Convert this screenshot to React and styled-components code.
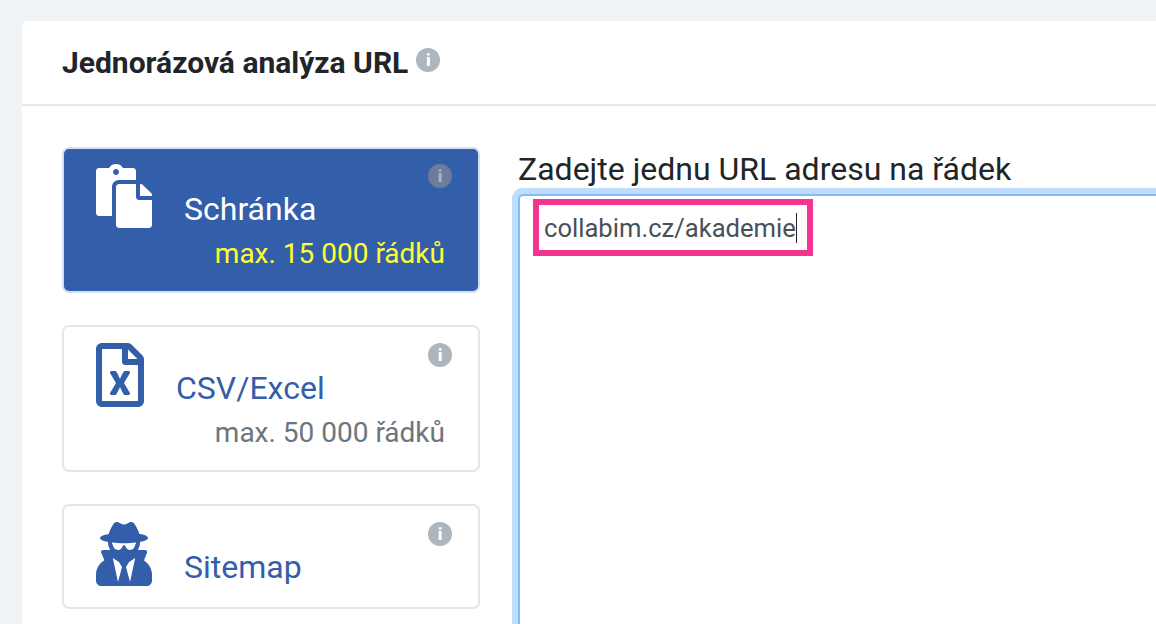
import React from 'react';
import styled, { createGlobalStyle } from 'styled-components';
import { FaPaste, FaRegFileExcel, FaUserSecret } from 'react-icons/fa';

const GlobalStyle = createGlobalStyle`
  html, body {
    margin: 0;
    height: 100%;
    overflow: hidden;
    background: #f0f3f6;
    font-family: Roboto, "Liberation Sans", sans-serif;
    color: #212529;
  }
`;

const Page = styled.div`
  width: 1156px;
  height: 624px;
  padding: 21px 0 0 22px;
  box-sizing: border-box;
  overflow: hidden;
`;

const Panel = styled.section`
  width: 1200px;
  height: 700px;
  background: #fff;
  border-radius: 5px 0 0 0;
`;

const PanelHeader = styled.header`
  display: flex;
  align-items: flex-start;
  gap: 8px;
  height: 85px;
  box-sizing: border-box;
  padding: 25px 40px 0;
  border-bottom: 2px solid #e6e8ea;
`;

const Title = styled.h2`
  margin: 0;
  font-size: 30px;
  line-height: 34px;
  font-weight: 700;
`;

const InfoDot = styled.span`
  display: flex;
  align-items: center;
  justify-content: center;
  flex: none;
  width: 24px;
  height: 24px;
  border-radius: 50%;
  background: ${(p) => (p.$dim ? '#6e7c9c' : '#adb5bd')};
  color: ${(p) => (p.$dim ? '#a9b3c6' : '#fff')};
  font-size: 17px;
  font-weight: 900;
  line-height: 1;
`;

const TitleInfo = styled(InfoDot)`
  margin-top: 2px;
`;

const PanelBody = styled.div`
  display: grid;
  grid-template-columns: 418px 1fr;
  column-gap: 38px;
  padding: 41px 0 0 40px;
`;

const SourceList = styled.div`
  display: flex;
  flex-direction: column;
  gap: 32px;
`;

const SourceCard = styled.div`
  position: relative;
  box-sizing: border-box;
  height: ${(p) => p.$height}px;
  padding: ${(p) => p.$top}px 33px 0 32px;
  border: 2px solid ${(p) => (p.$active ? '#d3e0f2' : '#e3e5e7')};
  border-radius: 7px;
  background: ${(p) => (p.$active ? '#335eaa' : '#fff')};
  color: ${(p) => (p.$active ? '#fff' : '#335eaa')};

  ${InfoDot} {
    position: absolute;
    top: ${(p) => p.$infoTop}px;
    right: 26px;
  }
`;

const CardRow = styled.div`
  display: flex;
  align-items: flex-start;
  gap: 32px;

  svg {
    display: block;
    flex: none;
    height: 64px;
    width: ${(p) => p.$iconWidth}px;
  }
`;

const CardLabel = styled.div`
  margin-top: 27px;
  font-size: 32px;
  line-height: 36px;
`;

const Limit = styled.div`
  margin-top: 10px;
  text-align: right;
  font-size: 28px;
  line-height: 32px;
  color: ${(p) => (p.$active ? '#ffff33' : '#6c757d')};
`;

const FieldLabel = styled.label`
  display: block;
  margin-bottom: 3px;
  font-size: 32px;
  line-height: 44px;
`;

const UrlField = styled.div`
  box-sizing: border-box;
  height: 500px;
  padding: 3px 0 0 13px;
  border: 2px solid #80bdff;
  border-right: 0;
  border-bottom: 0;
  border-radius: 5px 0 0 0;
  box-shadow: 0 0 0 6px #bfdcfb;
  font-size: 25.6px;
  color: #495057;
`;

const Highlight = styled.span`
  display: inline-flex;
  align-items: center;
  box-sizing: border-box;
  height: 57px;
  padding: 0 10px 0 5px;
  border: 6px solid #f1358f;
`;

const Caret = styled.span`
  display: inline-block;
  width: 1.5px;
  height: 30px;
  background: #212529;
`;

const App = () => (
  <Page>
    <GlobalStyle />
    <Panel>
      <PanelHeader>
        <Title>Jednorázová analýza URL</Title>
        <TitleInfo>i</TitleInfo>
      </PanelHeader>
      <PanelBody>
        <SourceList>
          <SourceCard $active $height={146} $top={15} $infoTop={15}>
            <CardRow $iconWidth={56}>
              <FaPaste />
              <CardLabel>Schránka</CardLabel>
            </CardRow>
            <Limit $active>max. 15 000 řádků</Limit>
            <InfoDot $dim>i</InfoDot>
          </SourceCard>
          <SourceCard $height={147} $top={16} $infoTop={16}>
            <CardRow $iconWidth={48}>
              <FaRegFileExcel />
              <CardLabel>CSV/Excel</CardLabel>
            </CardRow>
            <Limit>max. 50 000 řádků</Limit>
            <InfoDot>i</InfoDot>
          </SourceCard>
          <SourceCard $height={105} $top={16} $infoTop={16}>
            <CardRow $iconWidth={56}>
              <FaUserSecret />
              <CardLabel>Sitemap</CardLabel>
            </CardRow>
            <InfoDot>i</InfoDot>
          </SourceCard>
        </SourceList>
        <div>
          <FieldLabel>Zadejte jednu URL adresu na řádek</FieldLabel>
          <UrlField>
            <Highlight>
              collabim.cz/akademie
              <Caret />
            </Highlight>
          </UrlField>
        </div>
      </PanelBody>
    </Panel>
  </Page>
);

export default App;
